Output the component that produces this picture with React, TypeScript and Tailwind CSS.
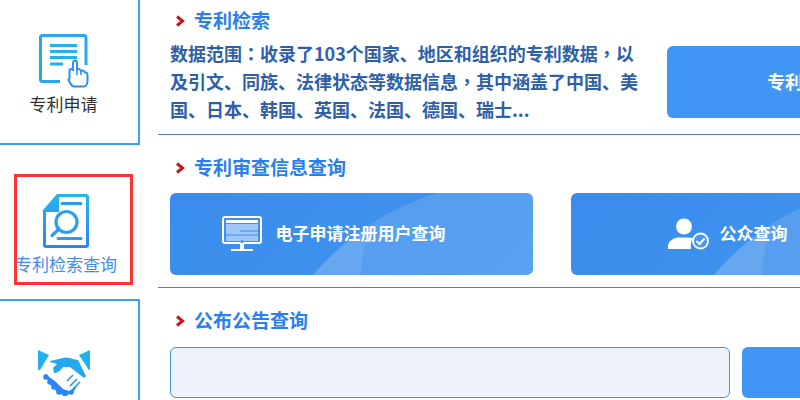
const font = "font-['Noto_Sans_CJK_SC','Liberation_Sans',sans-serif]";

function Chevron() {
  return (
    <svg width="10" height="12" viewBox="0 0 10 12" className="shrink-0">
      <path d="M2 1.5 L7.5 6 L2 10.5" fill="none" stroke="#c4161c" strokeWidth="3" />
    </svg>
  );
}

function Title({ children }: { children: string }) {
  return (
    <div className="flex items-center h-7 pl-[17px] gap-[9px]">
      <Chevron />
      <span className="pb-[2px] text-[19px] font-bold text-[#2a7ff0] leading-[26px]">{children}</span>
    </div>
  );
}

function Grad({ id }: { id: string }) {
  return (
    <defs>
      <linearGradient id={id} x1="0" y1="0" x2="0" y2="1">
        <stop offset="0" stopColor="#25b6ee" />
        <stop offset="1" stopColor="#2a84f0" />
      </linearGradient>
    </defs>
  );
}

function ApplyIcon() {
  return (
    <svg width="50" height="54" viewBox="0 0 50 54" className="block">
      <g fill="none">
        <path d="M21 47.5 H3.5 Q1.5 47.5 1.5 45.5 V3.5 Q1.5 1.5 3.5 1.5 H45 Q47 1.5 47 3.5 V31" stroke="#2aa6ef" strokeWidth="3" />
        <path d="M11 11.5 H38 M11 17.5 H38 M11 23.5 H38 M11 30 H24" stroke="#27aeee" strokeWidth="3" />
        <path d="M29.5 46 L30.5 44 L30.5 36 Q33.5 33 34 37 V29 Q34 26.5 36 26.5 Q38 26.5 38 29 V35.5 Q41 34 42 37 Q45 35.5 46 38.5 Q48.5 38 48.5 41 V47 Q48 52.5 45 52.5 H35 Q33 52.5 31.5 49.5 Z" stroke="#2a92ef" strokeWidth="2" />
        <path d="M42 37 V41 M38 36 V41" stroke="#2a92ef" strokeWidth="1.5" />
      </g>
    </svg>
  );
}

function SearchIcon() {
  return (
    <svg width="46" height="54" viewBox="0 0 46 54" className="block">
      <Grad id="a2" />
      <path d="M14 0 H43 Q46 0 46 3 V51 Q46 54 43 54 H3 Q0 54 0 51 V16 Z" fill="url(#a2)" />
      <path d="M16 3 H43 V51 H3 V18 H16 Z" fill="#fff" />
      <path d="M19 9.5 H38 M15 44.5 H38" stroke="#2a9cef" strokeWidth="3" strokeLinecap="round" />
      <circle cx="23.5" cy="28" r="10.5" fill="none" stroke="#2a9fef" strokeWidth="3.2" />
      <path d="M15 36 L9 41.5" stroke="#2a9cef" strokeWidth="3.2" strokeLinecap="round" />
    </svg>
  );
}

function ShakeIcon() {
  const scallops: [number, number][] = [[8, 27], [12, 32], [16, 37], [21, 42], [27, 43.5], [33, 42]];
  return (
    <svg width="52" height="46" viewBox="0 0 52 46" className="block">
      <path d="M0 0 L11 5 L2 20 L0 20 Z M52 0 L41 5 L51 20 L52 20 Z" fill="#22b0ee" />
      <path d="M12 11 L21 9 Q28 6 35 9 L40 10 L48 26 L46 28 L32 17 L25 17 Q21 23 16 23 L15 18 L19 14 L12 12 Z" fill="#25a9ee" />
      <path d="M7 24 L14 28 L30 24 L43 30 L36 41 L28 46 L20 43 L11 33 Z" fill="#2a86f0" />
      {scallops.map(([x, y]) => (
        <circle key={x} cx={x} cy={y} r="2.8" fill="#2a86f0" />
      ))}
      <path d="M9 23 L14 25 L20 25 L26 19 L32 19 L45 30 L38 37 L31 41 L25 39 L17 31 L11 27 Z" fill="#fff" />
      <path d="M35 25 L29 31 M39 29 L32 36 M42 32 L35 39" stroke="#2a90ef" strokeWidth="1.5" />
    </svg>
  );
}

function MonitorIcon() {
  return (
    <svg width="40" height="36" viewBox="0 0 40 36" className="block shrink-0">
      <rect x="1" y="1" width="38" height="26" rx="2" fill="#3f90ec" stroke="#fff" strokeWidth="2" />
      <rect x="4" y="4" width="32" height="3" fill="#fff" />
      <rect x="4" y="8" width="32" height="17" fill="#fff" opacity="0.5" />
      <path d="M18 15 H36 M4 19 H36" stroke="#3f90ec" strokeWidth="1" />
      <circle cx="20" cy="25.5" r="1.5" fill="#3f90ec" />
      <path d="M18 28 H22 V33 H18 Z M9 33 H31 V35 H9 Z" fill="#fff" />
    </svg>
  );
}

function PersonIcon() {
  return (
    <svg width="41" height="32" viewBox="0 0 41 32" className="block shrink-0">
      <circle cx="16" cy="8.5" r="8" fill="#fff" />
      <path d="M0 31 V27 Q1 21 10 19.5 H21 Q25 20 25 20 Q22 24 23 31 Z" fill="#fff" />
      <circle cx="32.5" cy="23" r="7.5" fill="#4a97ee" stroke="#fff" strokeWidth="1.8" />
      <path d="M28.5 23 L31.5 26 L36.5 20.5" fill="none" stroke="#fff" strokeWidth="2" />
    </svg>
  );
}

function Arcs() {
  return (
    <svg className="absolute inset-0" width="363" height="82" viewBox="0 0 363 82">
      <path d="M143 82 Q190 25 267 0 L363 0 L363 82 Z" fill="#fff" opacity="0.12" />
      <path d="M143 82 Q168 52 199 36 Q192 60 191 82 Z" fill="#fff" opacity="0.1" />
    </svg>
  );
}

function Card({ icon, label, cls }: { icon: React.ReactNode; label: string; cls: string }) {
  return (
    <div className="relative h-[82px] w-[363px] shrink-0 overflow-hidden rounded-[6px] bg-[linear-gradient(135deg,#3a8cec,#4295ef)]">
      <Arcs />
      <div className={`relative flex h-full items-center justify-center ${cls}`}>
        {icon}
        <span className="pb-[2px] text-[17px] font-bold leading-6 text-white">{label}</span>
      </div>
    </div>
  );
}

const mid = "font-['Noto_Sans_CJK_TC']";

export default function App() {
  return (
    <div className={`relative flex h-[400px] w-[800px] overflow-hidden bg-white ${font}`}>
      <aside className="flex w-[140px] shrink-0 flex-col">
        <div className="flex h-[145px] flex-col items-center border-b-[2px] border-r-[2px] border-[#3fa0e6] pr-[11px] pt-[34px]">
          <ApplyIcon />
          <span className="mt-[4px] text-[17px] leading-6 text-[#333]">专利申请</span>
        </div>
        <div className="flex h-[156px] flex-col items-center border-b-[2px] border-[#3fa0e6] pr-[8px] pt-[49px]">
          <SearchIcon />
          <span className="mt-[4px] text-[17px] leading-6 text-[#3f8cf0]">专利检索查询</span>
        </div>
        <div className="flex flex-1 flex-col items-center border-r-[2px] border-[#3fa0e6] pr-[10px] pt-[49px]">
          <ShakeIcon />
        </div>
      </aside>

      <main className="ml-[18px] w-[642px] shrink-0">
        <section className="h-[135px] border-b border-[#4a80c4] pt-[7px]">
          <Title>专利检索</Title>
          <div className="mt-[4px] flex items-start pl-3">
            <div className="w-[470px] shrink-0 text-[18px] font-bold leading-7 text-[#2f5fa8]">
              <div className="whitespace-nowrap">
                数据范围<span className={mid}>{"\uFF1A"}</span>收录了103个国家、地区和组织的专利数据<span className={mid}>{"\uFF0C"}</span>以
              </div>
              <div className="whitespace-nowrap">
                及引文、同族、法律状态等数据信息<span className={mid}>{"\uFF0C"}</span>其中涵盖了中国、美
              </div>
              <div className="whitespace-nowrap">国、日本、韩国、英国、法国、德国、瑞士...</div>
            </div>
            <div className="ml-[27px] mt-[7px] flex h-[72px] w-[272px] shrink-0 items-center justify-center rounded-[6px] bg-[#4096f5] pb-[2px] text-[18px] font-bold text-white">
              专利检索
            </div>
          </div>
        </section>

        <section className="h-[153px] border-b border-[#4a80c4] pt-[19px]">
          <Title>专利审查信息查询</Title>
          <div className="mt-[11px] flex gap-[38px] pl-3">
            <Card icon={<MonitorIcon />} label="电子申请注册用户查询" cls="gap-[14px] pr-[36px]" />
            <Card icon={<PersonIcon />} label="公众查询" cls="gap-[11px] pr-[50px]" />
          </div>
        </section>

        <section className="pt-[19px]">
          <Title>公布公告查询</Title>
          <div className="mt-[12px] flex gap-3 pl-3">
            <div className="h-[51px] w-[560px] shrink-0 rounded-[6px] border border-[#4096e0] bg-[#eef2fa]" />
            <div className="h-[51px] w-[200px] shrink-0 rounded-[6px] bg-[#4096f5]" />
          </div>
        </section>
      </main>

      <div className="absolute left-[14px] top-[174px] h-[111px] w-[119px] border-[3px] border-[#ff3333]" />
    </div>
  );
}
